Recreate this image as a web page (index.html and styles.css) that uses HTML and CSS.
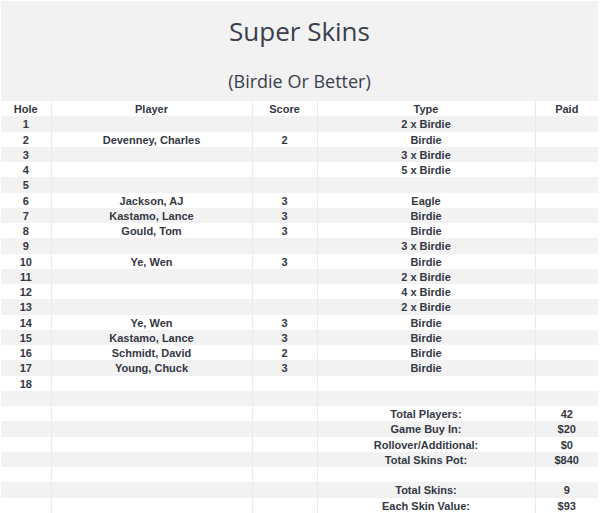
FILE: index.html
```html
<!DOCTYPE html>
<html>
<head>
<meta charset="utf-8">
<link rel="stylesheet" href="styles.css">
</head>
<body>
<div class="page">
  <header class="banner">
    <h1 class="title">Super Skins</h1>
    <h2 class="subtitle">(Birdie Or Better)</h2>
  </header>
  <table class="skins">
    <colgroup>
      <col class="c-hole"><col class="c-player"><col class="c-score"><col class="c-type"><col class="c-paid">
    </colgroup>
    <thead>
      <tr><th>Hole</th><th>Player</th><th>Score</th><th>Type</th><th>Paid</th></tr>
    </thead>
    <tbody>
      <tr><td>1</td><td></td><td></td><td>2 x Birdie</td><td></td></tr>
      <tr><td>2</td><td>Devenney, Charles</td><td>2</td><td>Birdie</td><td></td></tr>
      <tr><td>3</td><td></td><td></td><td>3 x Birdie</td><td></td></tr>
      <tr><td>4</td><td></td><td></td><td>5 x Birdie</td><td></td></tr>
      <tr><td>5</td><td></td><td></td><td></td><td></td></tr>
      <tr><td>6</td><td>Jackson, AJ</td><td>3</td><td>Eagle</td><td></td></tr>
      <tr><td>7</td><td>Kastamo, Lance</td><td>3</td><td>Birdie</td><td></td></tr>
      <tr><td>8</td><td>Gould, Tom</td><td>3</td><td>Birdie</td><td></td></tr>
      <tr><td>9</td><td></td><td></td><td>3 x Birdie</td><td></td></tr>
      <tr><td>10</td><td>Ye, Wen</td><td>3</td><td>Birdie</td><td></td></tr>
      <tr><td>11</td><td></td><td></td><td>2 x Birdie</td><td></td></tr>
      <tr><td>12</td><td></td><td></td><td>4 x Birdie</td><td></td></tr>
      <tr><td>13</td><td></td><td></td><td>2 x Birdie</td><td></td></tr>
      <tr><td>14</td><td>Ye, Wen</td><td>3</td><td>Birdie</td><td></td></tr>
      <tr><td>15</td><td>Kastamo, Lance</td><td>3</td><td>Birdie</td><td></td></tr>
      <tr><td>16</td><td>Schmidt, David</td><td>2</td><td>Birdie</td><td></td></tr>
      <tr><td>17</td><td>Young, Chuck</td><td>3</td><td>Birdie</td><td></td></tr>
      <tr><td>18</td><td></td><td></td><td></td><td></td></tr>
      <tr><td></td><td></td><td></td><td></td><td></td></tr>
      <tr><td></td><td></td><td></td><td>Total Players:</td><td>42</td></tr>
      <tr><td></td><td></td><td></td><td>Game Buy In:</td><td>$20</td></tr>
      <tr><td></td><td></td><td></td><td>Rollover/Additional:</td><td>$0</td></tr>
      <tr><td></td><td></td><td></td><td>Total Skins Pot:</td><td>$840</td></tr>
      <tr><td></td><td></td><td></td><td></td><td></td></tr>
      <tr><td></td><td></td><td></td><td>Total Skins:</td><td>9</td></tr>
      <tr><td></td><td></td><td></td><td>Each Skin Value:</td><td>$93</td></tr>
    </tbody>
  </table>
</div>
</body>
</html>
```
FILE: styles.css
```css
html, body {
  margin: 0;
  padding: 0;
  background: #ffffff;
}
.page {
  width: 597px;
  margin: 1px 0 0 1px;
}
.banner {
  background: #f2f2f2;
  height: 100px;
  display: flex;
  flex-direction: column;
  align-items: center;
  color: #3a3f4c;
  font-family: "Open Sans", "Noto Sans", sans-serif;
}
.title {
  margin: 13px 0 0;
  font-size: 26px;
  font-weight: 400;
  line-height: 34px;
}
.subtitle {
  margin: 20px 0 0;
  font-size: 18px;
  font-weight: 400;
  line-height: 26px;
}
.skins {
  width: 597px;
  table-layout: fixed;
  border-collapse: collapse;
  font-family: "Liberation Sans", Arial, sans-serif;
  font-size: 11px;
  font-weight: 700;
  color: #343843;
}
.c-hole { width: 50px; }
.c-player { width: 201px; }
.c-score { width: 65px; }
.c-type { width: 218px; }
.c-paid { width: 63px; }
.skins tr {
  height: 15.25px;
}
.skins th, .skins td {
  padding: 1px 0 0;
  text-align: center;
  line-height: 14px;
  border-left: 1px solid #ebebeb;
  white-space: nowrap;
}
.skins th:first-child, .skins td:first-child {
  border-left: none;
}
.skins tbody tr:nth-child(odd) {
  background: #f2f2f2;
}
```
